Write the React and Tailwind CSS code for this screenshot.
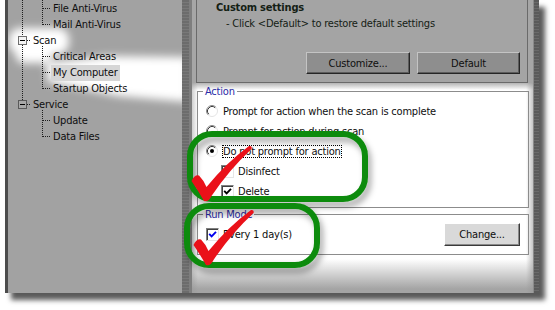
import React from "react";

const Chk = ({ checked, blue }) => (
  <span className="flex h-[13px] w-[13px] shrink-0 items-center justify-center border border-t-[#808080] border-l-[#808080] border-r-[#e6e6e6] border-b-[#e6e6e6] bg-white shadow-[inset_1px_1px_0_#404040]">
    {checked && (
      <svg width="9" height="9" viewBox="0 0 9 9">
        <path d="M1.2 3.8 L3.6 6.3 L8 1.8" fill="none" stroke={blue ? "#0000ee" : "#000"} strokeWidth="1.9" />
      </svg>
    )}
  </span>
);

const Radio = ({ checked }) => (
  <svg width="12" height="12" viewBox="0 0 12 12" className="shrink-0">
    <circle cx="6" cy="6" r="5.5" fill="#fff" />
    <path d="M2.11 9.89 A5.5 5.5 0 0 1 9.89 2.11" fill="none" stroke="#8a8a8a" strokeWidth="1" />
    <path d="M2.82 9.18 A4.5 4.5 0 0 1 9.18 2.82" fill="none" stroke="#3c3c3c" strokeWidth="1" />
    <path d="M9.89 2.11 A5.5 5.5 0 0 1 2.11 9.89" fill="none" stroke="#e4e4e4" strokeWidth="1" />
    {checked && <circle cx="6" cy="6" r="2" fill="#000" />}
  </svg>
);

const rows = [
  { t: "File Anti-Virus", l: 1 },
  { t: "Mail Anti-Virus", l: 1 },
  { t: "Scan", l: 0 },
  { t: "Critical Areas", l: 1 },
  { t: "My Computer", l: 1, sel: true },
  { t: "Startup Objects", l: 1 },
  { t: "Service", l: 0 },
  { t: "Update", l: 1 },
  { t: "Data Files", l: 1 },
];

function TreeLines() {
  const dot = { stroke: "#1e1e1e", strokeWidth: 1, strokeDasharray: "1 1", fill: "none" };
  const ticks = [8, 24, 56, 72, 88, 120, 136];
  return (
    <svg className="absolute left-0 top-0" width="174" height="293">
      <defs>
        <filter id="glow" x="-40%" y="-40%" width="180%" height="180%">
          <feGaussianBlur stdDeviation="4.5" />
        </filter>
      </defs>
      <g fill="#ffffff" filter="url(#glow)">
        <rect x="1" y="28" width="60" height="26" rx="11" />
        <rect x="8" y="46" width="36" height="17" rx="7" />
        <polygon points="38,63 100,56 180,57 180,102 110,96 40,82" />
      </g>
      <line x1="14.5" y1="0" x2="14.5" y2="36" {...dot} />
      <line x1="14.5" y1="45" x2="14.5" y2="100" {...dot} />
      <line x1="19" y1="40.5" x2="23" y2="40.5" {...dot} />
      <line x1="19" y1="104.5" x2="23" y2="104.5" {...dot} />
      <line x1="34.5" y1="0" x2="34.5" y2="25" {...dot} />
      <line x1="34.5" y1="46" x2="34.5" y2="89" {...dot} />
      <line x1="34.5" y1="110" x2="34.5" y2="137" {...dot} />
      {ticks.map((y) => (
        <line key={y} x1="35" y1={y + 0.5} x2="43" y2={y + 0.5} {...dot} />
      ))}
      <rect x="10.5" y="36.5" width="8" height="8" fill="#f4f4f4" stroke="#6e6e6e" />
      <line x1="12" y1="40.5" x2="17" y2="40.5" stroke="#000" />
      <rect x="10.5" y="100.5" width="8" height="8" fill="#a8a8a8" stroke="#5a5a5a" />
      <line x1="12" y1="104.5" x2="17" y2="104.5" stroke="#000" />
    </svg>
  );
}

function Annotations() {
  const check =
    "M191.5 181 Q194.5 174.5 199 175.5 Q203.5 180 206.5 187 Q226 163 249 146 Q252.5 145.5 251.5 149 Q229 170 211.5 196 Q208.5 202.5 204 201 Q198 190.5 191.5 181 Z";
  return (
    <svg className="pointer-events-none absolute left-0 top-0" width="555" height="310">
      <defs>
        <filter id="gs" x="-20%" y="-30%" width="140%" height="160%">
          <feDropShadow dx="3" dy="5" stdDeviation="3" floodColor="#000" floodOpacity="0.35" />
        </filter>
      </defs>
      <rect x="190" y="134" width="175" height="65" rx="22" fill="none" stroke="#0b8b0b" strokeWidth="6" filter="url(#gs)" />
      <rect x="187" y="206" width="130" height="59" rx="22" fill="none" stroke="#0b8b0b" strokeWidth="6" filter="url(#gs)" />
      <path d={check} fill="#ea1119" />
      <path d={check} fill="#ea1119" transform="translate(2 64)" />
    </svg>
  );
}

export default function App() {
  return (
    <div className="relative h-[310px] w-[555px] overflow-hidden bg-white font-['DejaVu_Sans_Condensed','Liberation_Sans',sans-serif] text-[11px] leading-[13px] tracking-[-0.2px] text-[#0e0e0e]">
      <div className="ml-[5px] flex h-[293px] w-[534px] shadow-[6px_7px_5px_rgba(0,0,0,0.65)]">
        <div className="w-[3px] bg-[#4c4c4c]" />

        {/* tree panel */}
        <div className="relative w-[174px] overflow-hidden bg-[#a2a2a2]">
          <TreeLines />
          <div className="relative flex flex-col pt-[1px]">
            {rows.map((r) => (
              <div key={r.t} className={r.l ? "flex h-[16px] items-center pl-[43px]" : "flex h-[16px] items-center pl-[23px]"}>
                <span className={r.sel ? "bg-[#d6d6d6] px-[2px] leading-[16px]" : "px-[2px] leading-[16px]"}>{r.t}</span>
              </div>
            ))}
          </div>
        </div>

        {/* splitter */}
        <div className="w-[10px] bg-[repeating-linear-gradient(180deg,#6c6c6c_0px,#6c6c6c_2px,#787878_2px,#787878_3px)] shadow-[inset_-3px_0_0_#7e7e7e]" />

        {/* right area */}
        <div className="flex w-[341px] flex-col bg-[#a6a6a6]">
          <div className="ml-[4px] flex h-[83px] w-[332px] flex-col border-x border-b border-[#6a6a6a] bg-[#a4a4a4] pl-[19px] pr-[7px]">
            <div className="mt-[1px] font-bold text-[#142014]">Custom settings</div>
            <div className="mt-[3px] pl-[10px] text-[#142014]">- Click &lt;Default&gt; to restore default settings</div>
            <div className="mb-[8px] mt-auto flex justify-end gap-[7px]">
              <div className="flex h-[22px] w-[104px] items-center justify-center border border-t-[#c4c4c4] border-l-[#c4c4c4] border-r-[#262626] border-b-[#262626] bg-[#8e8e8e] shadow-[inset_-1px_-1px_0_#5c5c5c]">
                Customize...
              </div>
              <div className="flex h-[22px] w-[103px] items-center justify-center border border-t-[#c4c4c4] border-l-[#c4c4c4] border-r-[#262626] border-b-[#262626] bg-[#8e8e8e] shadow-[inset_-1px_-1px_0_#5c5c5c]">
                Default
              </div>
            </div>
          </div>

          <div className="relative flex flex-1 flex-col bg-[linear-gradient(180deg,#b4b4b4_0px,#ffffff_7px,#ffffff_176px,#a4a4a4_206px)]">
            <div className="pointer-events-none absolute inset-0 bg-[linear-gradient(90deg,rgba(150,150,150,0.45)_0px,rgba(255,255,255,0)_6px,rgba(255,255,255,0)_334px,rgba(150,150,150,0.55)_341px)]" />

            <fieldset className="relative ml-[5px] mt-[2px] h-[123px] w-[332px] border border-[#8c8c8c] p-0">
              <legend className="ml-[5px] px-[2px] leading-[13px] text-[#2a2aa6]">Action</legend>
              <div className="flex flex-col pl-[8px] pt-[3px]">
                <div className="flex h-[20px] items-center">
                  <Radio />
                  <span className="ml-[5px]">Prompt for action when the scan is complete</span>
                </div>
                <div className="flex h-[20px] items-center">
                  <Radio />
                  <span className="ml-[5px]">Prompt for action during scan</span>
                </div>
                <div className="flex h-[20px] items-center">
                  <Radio checked />
                  <span className="ml-[4px] border border-dotted border-[#000] leading-[11px]">Do not prompt for action</span>
                </div>
                <div className="flex h-[20px] items-center pl-[15px]">
                  <Chk />
                  <span className="ml-[4px]">Disinfect</span>
                </div>
                <div className="flex h-[20px] items-center pl-[15px]">
                  <Chk checked />
                  <span className="ml-[4px]">Delete</span>
                </div>
              </div>
            </fieldset>

            <fieldset className="relative ml-[5px] h-[47px] w-[332px] border border-[#8c8c8c] p-0">
              <legend className="ml-[5px] px-[2px] leading-[13px] text-[#2a2aa6]">Run Mode</legend>
              <div className="mt-[2px] flex h-[23px] items-center pl-[8px] pr-[8px]">
                <Chk checked blue />
                <span className="ml-[4px]">Every 1 day(s)</span>
                <div className="ml-auto flex h-[23px] w-[76px] items-center justify-center border border-t-[#ffffff] border-l-[#ffffff] border-r-[#3a3a3a] border-b-[#3a3a3a] bg-[#d9d9d9] shadow-[inset_-1px_-1px_0_#8a8a8a]">
                  Change...
                </div>
              </div>
            </fieldset>
          </div>
        </div>

        <div className="w-[6px] bg-[repeating-linear-gradient(180deg,#5a5a5a_0px,#5a5a5a_2px,#6a6a6a_2px,#6a6a6a_3px)] shadow-[inset_1px_0_0_#8a8a8a]" />
      </div>
      <Annotations />
    </div>
  );
}
